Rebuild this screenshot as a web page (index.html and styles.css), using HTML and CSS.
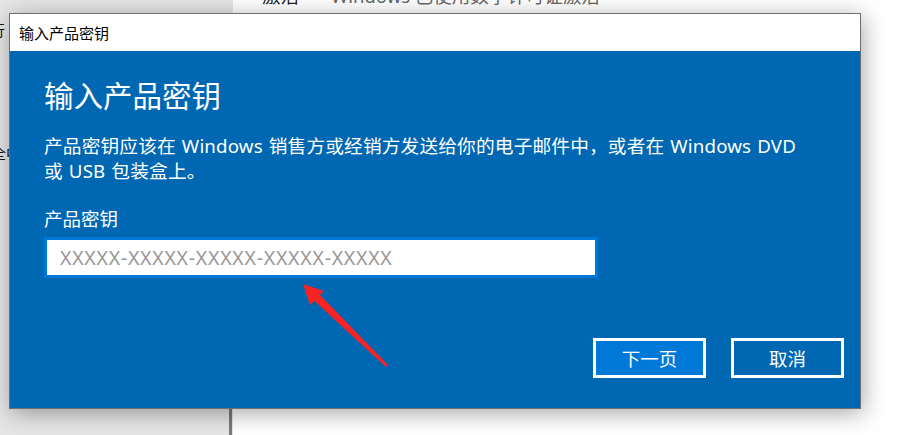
FILE: index.html
```html
<!DOCTYPE html>
<html lang="zh-CN">
<head>
<meta charset="utf-8">
<title>输入产品密钥</title>
<link rel="stylesheet" href="styles.css">
</head>
<body>
<div class="desktop">
  <aside class="sidebar">
    <div class="side-list">
      <div class="side-item first">运行</div>
      <div class="side-item second">安全中心</div>
    </div>
    <div class="side-track"><div class="side-thumb"></div></div>
  </aside>
  <main class="settings">
    <div class="status-row">
      <span class="status-label">激活</span>
      <span class="status-value">Windows 已使用数字许可证激活</span>
    </div>
  </main>

  <section class="dialog">
    <header class="titlebar">输入产品密钥</header>
    <div class="dialog-body">
      <h1 class="heading">输入产品密钥</h1>
      <p class="desc">产品密钥应该在 Windows 销售方或经销方发送给你的电子邮件中，或者在 Windows DVD<br>或 USB 包装盒上。</p>
      <label class="field-label" for="key">产品密钥</label>
      <div class="input-wrap">
        <input id="key" class="key-input" type="text" placeholder="XXXXX-XXXXX-XXXXX-XXXXX-XXXXX">
      </div>
      <div class="actions">
        <button class="btn btn-primary">下一页</button>
        <button class="btn">取消</button>
      </div>
    </div>
  </section>

  <svg class="annotation" width="899" height="435" viewBox="0 0 899 435" aria-hidden="true">
    <polygon points="303,284 324,291 320,295 388,365 386,367 314.5,301 310,305" fill="#fa2323"/>
  </svg>
</div>
</body>
</html>
```

FILE: styles.css
```css
* { box-sizing: border-box; }
html, body {
  margin: 0;
  padding: 0;
  width: 899px;
  height: 435px;
  overflow: hidden;
  background: #ffffff;
  font-family: "Noto Sans", "Noto Sans CJK SC", sans-serif;
}
.desktop {
  position: relative;
  display: flex;
  width: 899px;
  height: 435px;
  overflow: hidden;
}
.sidebar {
  width: 233px;
  flex: none;
  display: flex;
  background: #e6e6e6;
}
.side-list {
  flex: 1;
  font-family: "Noto Sans CJK SC", sans-serif;
  font-size: 15px;
  line-height: 20px;
  color: #111;
}
.side-item {
  white-space: nowrap;
}
.side-item.first { margin-top: 20px; margin-left: -25px; }
.side-item.second { margin-top: 103px; margin-left: -24px; }
.side-track {
  width: 4px;
  flex: none;
  display: flex;
  flex-direction: column;
}
.side-thumb {
  margin-top: 404px;
  height: 40px;
  width: 3px;
  background: #7a7a7a;
}
.settings {
  flex: 1;
  background: #ffffff;
}
.status-row {
  margin-top: -17px;
  padding-left: 29px;
  display: flex;
  gap: 32px;
  font-size: 18.5px;
  line-height: 25px;
  white-space: nowrap;
}
.status-label { color: #222; }
.status-value { color: #666; }

.dialog {
  position: absolute;
  left: 9px;
  top: 13px;
  width: 852px;
  height: 396px;
  border: 1px solid #6f6f6f;
  background: #0067b3;
  box-shadow: 2px 4px 22px rgba(0, 0, 0, 0.35);
  display: flex;
  flex-direction: column;
}
.titlebar {
  height: 37px;
  flex: none;
  background: #ffffff;
  display: flex;
  align-items: center;
  padding-left: 9px;
  font-family: "Noto Sans CJK SC", sans-serif;
  font-size: 15px;
  color: #000;
}
.dialog-body {
  flex: 1;
  padding: 27px 16px 0 34px;
  display: flex;
  flex-direction: column;
  color: #ffffff;
}
.heading {
  margin: 0;
  font-weight: 400;
  font-size: 29.5px;
  line-height: 36px;
}
.desc {
  margin: 19px 0 0;
  font-size: 18.7px;
  line-height: 25px;
  word-spacing: 1px;
  letter-spacing: 0.15px;
  white-space: nowrap;
}
.field-label {
  margin-top: 23px;
  font-size: 18.5px;
  line-height: 25px;
}
.input-wrap {
  margin-top: 6px;
  width: 554px;
  height: 41px;
  border: 3px solid #0078d7;
  background: #ffffff;
  display: flex;
}
.key-input {
  flex: 1;
  border: 0;
  outline: 0;
  background: transparent;
  padding: 0 0 0 13px;
  font-family: "Noto Sans", sans-serif;
  font-size: 19.5px;
  letter-spacing: 0.75px;
  color: #000;
}
.key-input::placeholder { color: #999999; }
.actions {
  margin-top: 60px;
  display: flex;
  justify-content: flex-end;
  gap: 25px;
}
.btn {
  width: 113px;
  height: 40px;
  border: 3px solid #ffffff;
  background: #0067b3;
  color: #ffffff;
  font-family: "Noto Sans CJK SC", sans-serif;
  font-size: 18.5px;
  padding: 0;
}
.btn-primary { background: #0078d7; }
.annotation {
  position: absolute;
  left: 0;
  top: 0;
  pointer-events: none;
}
```
